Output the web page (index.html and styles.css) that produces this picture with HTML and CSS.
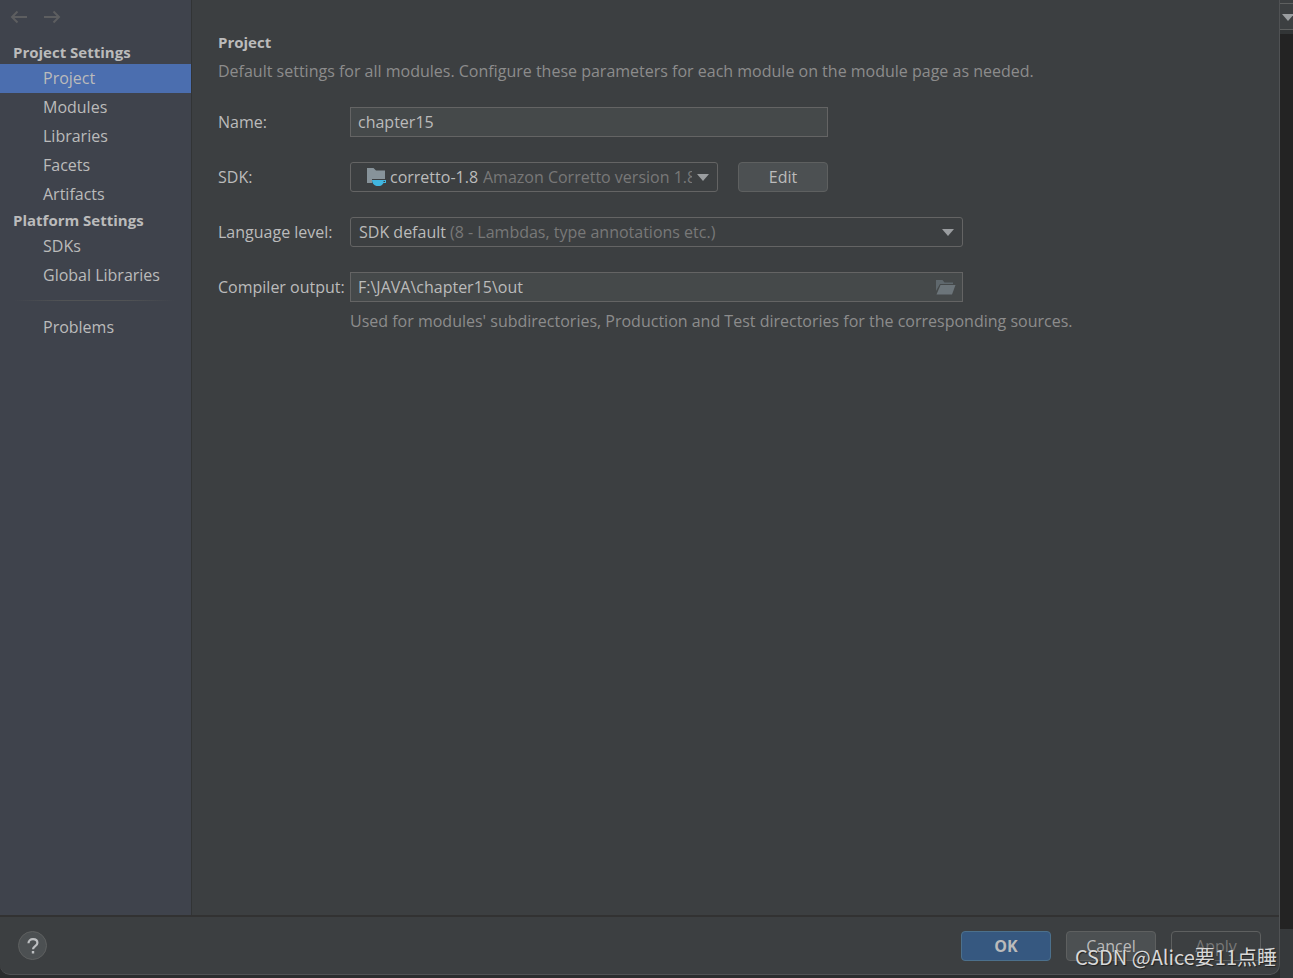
FILE: index.html
```html
<!DOCTYPE html>
<html lang="en">
<head>
<meta charset="utf-8">
<title>Project Structure</title>
<link rel="stylesheet" href="styles.css">
</head>
<body>
<div class="screen">
  <div class="dialog">
    <div class="workspace">
      <aside class="sidebar">
        <div class="history">
          <button class="history-button" type="button" aria-label="Back" disabled>
            <svg width="18" height="14" viewBox="0 0 18 14"><path d="M17 7H2M7.500 1.500L2 7l5.500 5.500"/></svg>
          </button>
          <button class="history-button" type="button" aria-label="Forward" disabled>
            <svg width="18" height="14" viewBox="0 0 18 14"><path d="M1 7h15M10.500 1.500L16 7l-5.500 5.500"/></svg>
          </button>
        </div>
        <nav class="nav">
          <h2 class="nav-heading">Project Settings</h2>
          <a class="nav-item nav-item-selected" href="#project">Project</a>
          <a class="nav-item" href="#modules">Modules</a>
          <a class="nav-item" href="#libraries">Libraries</a>
          <a class="nav-item" href="#facets">Facets</a>
          <a class="nav-item" href="#artifacts">Artifacts</a>
          <h2 class="nav-heading">Platform Settings</h2>
          <a class="nav-item" href="#sdks">SDKs</a>
          <a class="nav-item" href="#global">Global Libraries</a>
          <hr class="nav-separator">
          <a class="nav-item" href="#problems">Problems</a>
        </nav>
      </aside>
      <main class="content">
        <h1 class="title">Project</h1>
        <p class="hint">Default settings for all modules. Configure these parameters for each module on the module page as needed.</p>
        <form class="form" id="project">
          <label for="name">Name:</label>
          <div class="control control-short"><input class="field" id="name" type="text" value="chapter15"></div>

          <label for="sdk">SDK:</label>
          <div class="control control-short sdk-row">
            <div class="combo">
              <select class="combo-select combo-select-icon" id="sdk"><option>corretto-1.8</option></select>
              <span class="combo-face combo-face-sdk">
                <svg class="sdk-icon" width="20" height="18" viewBox="0 0 20 18">
                  <path fill="#87939a" d="M0 0h6.500l2.500 2.500h9V11H5v4H0z"/>
                  <path fill="#40b6e0" d="M5 12h14v3h-2.500c-.8 1.500-2 3-4 3H9.500C7 17.500 5 15 5 12z"/>
                  <path fill="#3c3f41" d="M16.500 13h1.500v1h-1.500z"/>
                </svg>
                <span class="combo-detail combo-detail-sdk">Amazon Corretto version 1.8</span>
                <svg class="arrow" width="12" height="7" viewBox="0 0 12 7"><path d="M0 0h12L6 7z"/></svg>
              </span>
            </div>
            <button class="button" type="button">Edit</button>
          </div>

          <label for="level">Language level:</label>
          <div class="control combo">
            <select class="combo-select" id="level"><option>SDK default</option></select>
            <span class="combo-face combo-face-level">
              <span class="combo-detail">(8 - Lambdas, type annotations etc.)</span>
              <svg class="arrow" width="12" height="7" viewBox="0 0 12 7"><path d="M0 0h12L6 7z"/></svg>
            </span>
          </div>

          <label for="output">Compiler output:</label>
          <div class="control combo">
            <input class="field" id="output" type="text" value="F:\JAVA\chapter15\out">
            <button class="browse" type="button" aria-label="Browse">
              <svg width="20" height="15" viewBox="0 0 20 15"><path fill="#5f686d" d="M0 0h6.500l2 2.500H17V4H4L0 11z"/><path fill="#6c757a" d="M4.500 5H19.500L16 14.500H.5z"/></svg>
            </button>
          </div>
        </form>
        <p class="hint output-hint">Used for modules' subdirectories, Production and Test directories for the corresponding sources.</p>
      </main>
    </div>
    <footer class="footer">
      <button class="help" type="button" aria-label="Help">
        <svg width="12" height="16" viewBox="0 0 12 16"><path d="M1.500 5.200C1.500 2.600 3.400 1.200 6 1.200s4.400 1.500 4.400 3.800c0 3-4.400 3.200-4.400 6.200" fill="none" stroke="#bdbfc1" stroke-width="2.200"/><path d="M4.800 13h2.400v2.500H4.800z" fill="#bdbfc1"/></svg>
      </button>
      <div class="actions">
        <button class="button button-primary" type="button">OK</button>
        <button class="button" type="button">Cancel</button>
        <button class="button" type="button" disabled>Apply</button>
      </div>
    </footer>
  </div>
  <div class="backdrop">
    <div class="backdrop-toolbar"><svg class="arrow" width="12" height="7" viewBox="0 0 12 7"><path d="M0 0h12L6 7z"/></svg></div>
    <div class="backdrop-status"></div>
  </div>
  <div class="watermark">CSDN @Alice要11点睡</div>
</div>
</body>
</html>
```
FILE: styles.css
```css
* { box-sizing: border-box; }

body {
  margin: 0;
  background: #2b2d2e;
  color: #bbbbbb;
  font: 16px/24px "Open Sans", "Noto Sans CJK SC", sans-serif;
}

button, input, select { font: inherit; color: inherit; }

h1, h2, p { margin: 0; font-size: inherit; }

svg { display: block; flex: none; }

.screen {
  position: relative;
  display: grid;
  grid-template-columns: 1fr 13px;
  min-height: 100vh;
}

.dialog {
  display: flex;
  flex-direction: column;
  margin-bottom: 3px;
  background: #3c3f41;
  border-right: 1px solid #505254;
  border-bottom: 1px solid #505254;
  border-radius: 0 0 10px 10px;
}

.workspace { display: flex; flex: 1; }

.sidebar {
  flex: none;
  width: 192px;
  background: #3f434c;
  border-right: 1px solid #323435;
}

.history {
  display: flex;
  gap: 15px;
  height: 41px;
  padding: 10px 0 0 10px;
}

.history-button {
  height: 14px;
  padding: 0;
  border: 0;
  background: none;
}

.history-button path {
  fill: none;
  stroke: #5d5e60;
  stroke-width: 2;
}

.nav { display: flex; flex-direction: column; }

.nav-heading {
  padding-left: 13px;
  font-size: 15px;
  font-weight: 700;
  line-height: 23px;
}

.nav-item {
  padding-left: 43px;
  color: inherit;
  line-height: 29px;
  text-decoration: none;
}

.nav-item-selected { background: #4b6eaf; }

.nav-separator {
  width: 160px;
  height: 1px;
  margin: 10px 0 12px 14px;
  border: 0;
  background: linear-gradient(90deg, transparent, #515355 30%, #515355 70%, transparent);
}

.content {
  flex: 1;
  min-width: 0;
  padding: 30px 26px;
}

.title { font-size: 15px; font-weight: 700; }

.hint { color: #8c8c8c; }

.title + .hint { margin-top: 5px; }

.form {
  display: grid;
  grid-template-columns: 132px minmax(0, 613px);
  row-gap: 25px;
  align-items: center;
  margin-top: 24px;
}

.control-short { max-width: 478px; }

.field {
  display: block;
  width: 100%;
  height: 30px;
  padding: 0 7px;
  border: 1px solid #646464;
  border-radius: 0;
  background: #45494a;
}

.sdk-row {
  display: grid;
  grid-template-columns: 1fr auto;
  gap: 20px;
}

.combo { display: grid; min-width: 0; }

.combo > * { grid-area: 1 / 1; }

.combo-select {
  appearance: none;
  width: 100%;
  height: 30px;
  padding: 0 8px;
  border: 1px solid #646464;
  border-radius: 3px;
  background: #3c3f41;
}

.combo-select-icon { padding-left: 39px; }

.combo-face {
  display: flex;
  align-items: center;
  min-width: 0;
  padding-right: 9px;
  color: #787878;
  pointer-events: none;
}

.combo-face-sdk { padding-left: 17px; }

.combo-face-level { padding-left: 100px; }

.combo-detail {
  flex: 1;
  min-width: 0;
  overflow: hidden;
  white-space: nowrap;
}

.combo-detail-sdk { margin: 0 5px 0 96px; }

.arrow { fill: #9a9da0; }

.browse {
  justify-self: end;
  align-self: center;
  margin-right: 7px;
  padding: 0;
  border: 0;
  background: none;
}

.output-hint { margin: 7px 0 0 132px; }

.button {
  width: 90px;
  height: 30px;
  padding: 0;
  border: 1px solid #5e6060;
  border-radius: 4px;
  background: #4c5052;
}

.button:disabled {
  background: none;
  color: #777777;
}

.button-primary {
  border-color: #4c708c;
  background: #365880;
  font-weight: 700;
}

.footer {
  display: flex;
  align-items: center;
  justify-content: space-between;
  height: 59px;
  padding: 0 18px;
  border-top: 2px solid #323232;
}

.help {
  display: grid;
  place-items: center;
  width: 29px;
  height: 29px;
  padding: 0;
  border: 1px solid #5e6060;
  border-radius: 50%;
  background: #4c5052;
}

.actions { display: flex; gap: 15px; }

.backdrop {
  display: flex;
  flex-direction: column;
  justify-content: space-between;
  background: #232323;
}

.backdrop-toolbar {
  height: 34px;
  padding: 14px 0 0 2px;
  overflow: hidden;
  border-bottom: 4px solid #323536;
  background: linear-gradient(#3c3f41 3px, #5e6060 3px 4px, #3c3f41 4px 29px, #5e6060 29px);
}

.backdrop-status {
  height: 49px;
  background: #36393b;
}

.watermark {
  position: absolute;
  right: 16px;
  bottom: 6px;
  color: #d8d8d8;
  font: 20px/30px "Noto Sans CJK SC", sans-serif;
  text-shadow: 1px 1px 1px #222222;
  pointer-events: none;
}
```
